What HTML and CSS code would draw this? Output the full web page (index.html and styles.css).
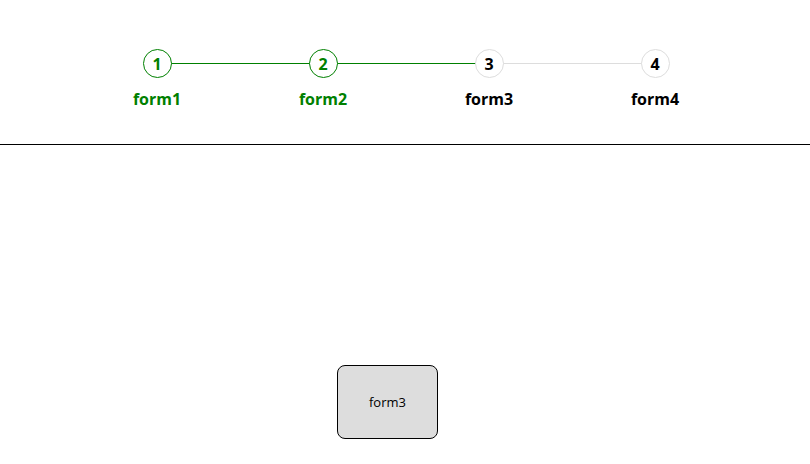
FILE: index.html
```html
<!DOCTYPE html>
<html>
<head>
<meta charset="utf-8">
<link rel="stylesheet" href="styles.css">
</head>
<body>
<header class="stepper-wrap">
  <ol class="stepper">
    <li class="step done">
      <span class="bar-right"></span>
      <span class="dot">1</span>
      <span class="label">form1</span>
    </li>
    <li class="step done">
      <span class="bar-left"></span>
      <span class="bar-right"></span>
      <span class="dot">2</span>
      <span class="label">form2</span>
    </li>
    <li class="step current">
      <span class="bar-left"></span>
      <span class="bar-right pending"></span>
      <span class="dot">3</span>
      <span class="label">form3</span>
    </li>
    <li class="step">
      <span class="bar-left pending"></span>
      <span class="dot">4</span>
      <span class="label">form4</span>
    </li>
  </ol>
</header>
<main class="content">
  <div class="form-box">form3</div>
</main>
</body>
</html>
```
FILE: styles.css
```css
html, body {
  margin: 0;
  padding: 0;
  background: #fff;
}
body {
  font-family: "Open Sans", "Noto Sans", sans-serif;
  color: #000;
}
.stepper-wrap {
  padding-top: 49px;
  height: 95px;
  border-bottom: 1px solid #000;
}
.stepper {
  list-style: none;
  margin: 0 0 0 74px;
  padding: 0;
  width: 664px;
  display: flex;
}
.step {
  position: relative;
  flex: 1;
  display: flex;
  flex-direction: column;
  align-items: center;
}
.dot {
  position: relative;
  z-index: 1;
  box-sizing: border-box;
  width: 29px;
  height: 29px;
  border-radius: 50%;
  border: 1px solid #ddd;
  background: #fff;
  display: flex;
  align-items: center;
  justify-content: center;
  font-weight: 700;
  font-size: 16px;
  line-height: 1;
}
.label {
  margin-top: 10px;
  font-weight: 700;
  font-size: 16px;
  line-height: 22px;
}
.bar-left, .bar-right {
  position: absolute;
  top: 14px;
  height: 1px;
  width: 50%;
  background: #008000;
}
.bar-left { left: 0; }
.bar-right { right: 0; }
.bar-left.pending, .bar-right.pending { background: #ddd; }
.step.done .dot {
  border-color: #008000;
  color: #008000;
}
.step.done .label { color: #008000; }
.content {
  padding-top: 220px;
}
.form-box {
  box-sizing: border-box;
  margin-left: 337px;
  width: 101px;
  height: 74px;
  border: 1px solid #000;
  border-radius: 8px;
  background: #ddd;
  display: flex;
  align-items: center;
  justify-content: center;
  font-size: 13px;
  font-family: "Open Sans", "Noto Sans", sans-serif;
}
```
